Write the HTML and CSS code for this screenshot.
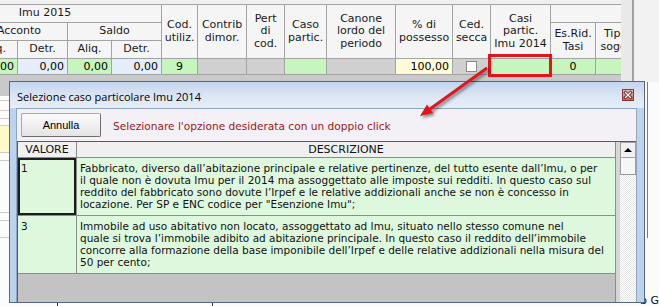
FILE: index.html
```html
<!DOCTYPE html>
<html>
<head>
	<meta charset="utf-8">
	<title>Selezione caso particolare Imu 2014</title>
	<link rel="stylesheet" href="styles.css">
</head>
<body>
<div class="screen">

	<div class="backdrop">
		<div class="sheet">
			<table class="imu">
				<colgroup>
					<col style="width:42px"><col style="width:47px"><col style="width:50px"><col style="width:44px"><col style="width:50px">
					<col style="width:36px"><col style="width:49px"><col style="width:38px"><col style="width:42px"><col style="width:69px">
					<col style="width:57px"><col style="width:38px"><col style="width:60px"><col style="width:45px"><col style="width:40px">
				</colgroup>
				<tr>
					<th colspan="5">Imu 2015</th>
					<th rowspan="3">Cod.<br>utiliz.</th>
					<th rowspan="3">Contrib<br>dimor.</th>
					<th rowspan="3">Pert<br>di<br>cod.</th>
					<th rowspan="3">Caso<br>partic.</th>
					<th rowspan="3">Canone<br>lordo del<br>periodo</th>
					<th rowspan="3">% di<br>possesso</th>
					<th rowspan="3">Ced.<br>secca</th>
					<th rowspan="3">Casi<br>partic.<br>Imu 2014</th>
					<th colspan="2"></th>
				</tr>
				<tr>
					<th rowspan="2">Rend.</th>
					<th colspan="2">Acconto</th>
					<th colspan="2">Saldo</th>
					<th rowspan="2">Es.Rid.<br>Tasi</th>
					<th rowspan="2">Tipo<br>sogg.</th>
				</tr>
				<tr>
					<th>Aliq.</th>
					<th>Detr.</th>
					<th>Aliq.</th>
					<th>Detr.</th>
				</tr>
				<tr class="data">
					<td class="n r">0,00</td>
					<td class="g r">0,00</td>
					<td class="b r">0,00</td>
					<td class="g r">0,00</td>
					<td class="b r">0,00</td>
					<td class="g c">9</td>
					<td class="n"></td>
					<td class="n"></td>
					<td class="g"></td>
					<td class="n"></td>
					<td class="y r">100,00</td>
					<td class="n c"><span class="check"></span></td>
					<td class="g"></td>
					<td class="g c">0</td>
					<td class="g"></td>
				</tr>
			</table>
			<div class="band"></div>
			<div class="list">
				<div class="li h5"></div>
				<div class="li h10"></div>
				<div class="li h8"></div>
				<div class="li h7"></div>
				<div class="li h27 yellow"></div>
				<div class="li h8"></div>
				<div class="li h52"></div>
				<div class="li h8"></div>
				<div class="li h17"></div>
				<div class="tab"></div>
			</div>
		</div>
		<div class="side">
			<div class="side-top"><div class="pane"></div></div>
			<div class="side-bottom">
				<div class="vline"></div>
				<div class="side-foot">b G</div>
			</div>
		</div>
	</div>

	<div class="dialog">
		<div class="titlebar">
			<span>Selezione caso particolare Imu 2014</span>
			<span class="close">
				<svg width="12" height="12" viewBox="0 0 12 12">
					<path d="M3.5 3.5 L8.5 8.5 M8.5 3.5 L3.5 8.5" stroke="#5a1414" stroke-width="3" stroke-linecap="square"/>
					<path d="M3.5 3.5 L8.5 8.5 M8.5 3.5 L3.5 8.5" stroke="#fff" stroke-width="1.4" stroke-linecap="square"/>
				</svg>
			</span>
		</div>
		<div class="body">
			<div class="toolbar">
				<button class="btn">Annulla</button>
				<span class="hint">Selezionare l'opzione desiderata con un doppio click</span>
			</div>
			<div class="grid">
				<div class="rows">
					<div class="hdr">
						<div class="c-val">VALORE</div>
						<div class="c-desc">DESCRIZIONE</div>
					</div>
					<div class="row sel">
						<div class="c-val">1</div>
						<div class="c-desc">Fabbricato, diverso dall’abitazione principale e relative pertinenze, del tutto esente dall’Imu, o per<br>il quale non è dovuta Imu per il 2014 ma assoggettato alle imposte sui redditi. In questo caso sul<br>reddito del fabbricato sono dovute l’Irpef e le relative addizionali anche se non è concesso in<br>locazione. Per SP e ENC codice per "Esenzione Imu";</div>
					</div>
					<div class="row">
						<div class="c-val">3</div>
						<div class="c-desc">Immobile ad uso abitativo non locato, assoggettato ad Imu, situato nello stesso comune nel<br>quale si trova l’immobile adibito ad abitazione principale. In questo caso il reddito dell’immobile<br>concorre alla formazione della base imponibile dell’Irpef e delle relative addizionali nella misura del<br>50 per cento;</div>
					</div>
				</div>
				<div class="gap"></div>
				<div class="scroll">
					<div class="up"><span class="tri"></span></div>
					<div class="thumb"></div>
				</div>
			</div>
		</div>
	</div>

	<div class="mark"></div>
	<svg class="arrow" width="659" height="306" viewBox="0 0 659 306">
		<line x1="487" y1="68" x2="430" y2="109" stroke="#e3141c" stroke-width="3"/>
		<polygon points="420,116 433,113 427,104.5" fill="#e3141c"/>
	</svg>

</div>
</body>
</html>
```

FILE: styles.css
```css
* {
	box-sizing: border-box;
}

html, body {
	margin: 0;
}

body {
	width: 659px;
	height: 306px;
	overflow: hidden;
	background: #f0f0f0;
	font-family: "DejaVu Sans", Verdana, sans-serif;
	color: #111;
}

.screen {
	position: relative;
	width: 659px;
	height: 306px;
	overflow: hidden;
}

/* window behind the dialog */

.backdrop {
	display: flex;
	height: 100%;
}

.sheet {
	width: 621px;
	overflow: hidden;
	display: flex;
	flex-direction: column;
	padding-top: 4px;
}

.imu {
	border-collapse: collapse;
	table-layout: fixed;
	width: 707px;
	margin-left: -72px;
	font-size: 11px;
	flex: none;
}

.imu th {
	background: #f5f5f5;
	border: 1px solid #a3a3a3;
	font-weight: normal;
	line-height: 12.5px;
	height: 18px;
	padding: 0;
	color: #1a1a1a;
	white-space: nowrap;
	overflow: hidden;
}

.imu td {
	border: 1px solid #a3a3a3;
	height: 16px;
	padding: 0 3px;
	line-height: 14px;
	color: #000;
	white-space: nowrap;
}

.g { background: #c6f5bd; }
.b { background: #e4eefa; }
.n { background: #d0d0d0; }
.y { background: #fffbd6; }
.r { text-align: right; }
.c { text-align: center; }

.check {
	display: inline-block;
	width: 11px;
	height: 11px;
	background: #fff;
	border: 1px solid #8a8a8a;
	vertical-align: middle;
}

.band {
	height: 21px;
	background: #c9c9c9;
	flex: none;
}

.list {
	flex: 1;
	background: #fcfcfc;
	display: flex;
	flex-direction: column;
}

.li {
	border-bottom: 1px solid #cdcdcd;
}

.h5 { height: 5px; }
.h7 { height: 7px; }
.h8 { height: 8px; }
.h10 { height: 10px; }
.h17 { height: 17px; }
.h27 { height: 27px; }
.h52 { height: 52px; }

.yellow {
	background: #fff8c8;
}

.tab {
	margin-top: auto;
	margin-left: 57px;
	width: 156px;
	height: 4px;
	border: 1px solid #333;
	border-bottom: none;
	background: #fff;
}

.side {
	flex: 1;
	display: flex;
	flex-direction: column;
}

.side-top {
	height: 82px;
	padding-left: 11px;
	background: #e9e9e9;
}

.side-top .pane {
	height: 100%;
	border-left: 2px solid #a0a0a0;
	background: #f2f2f2;
}

.side-bottom {
	flex: 1;
	background: #fbfbfb;
	padding-left: 26px;
	display: flex;
	flex-direction: column;
}

.vline {
	height: 156px;
	border-left: 1px solid #7a7a7a;
}

.side-foot {
	margin-top: auto;
	margin-left: -7px;
	font-size: 11px;
	line-height: 10px;
	white-space: nowrap;
}

/* dialog */

.dialog {
	position: absolute;
	left: 9px;
	top: 81px;
	width: 636px;
	height: 222px;
	border: 1px solid #56677e;
	background: #bcd3ee;
	display: flex;
	flex-direction: column;
}

.titlebar {
	height: 26px;
	flex: none;
	display: flex;
	align-items: center;
	justify-content: space-between;
	padding: 2px 10px 0 7px;
	background: linear-gradient(#c2d5ee, #dce6f3 55%, #e6edf6);
	font-family: "Open Sans", sans-serif;
	font-size: 11px;
	color: #000;
}

.close {
	display: flex;
	width: 12px;
	height: 12px;
	border: 1px solid #8e3434;
	background: linear-gradient(#e9b9b0, #c8675d);
	margin-top: -2px;
}

.close svg {
	margin: -1px;
}

.body {
	flex: 1;
	margin: 0 7px 0 6px;
	background: #f3f1f6;
	border: 1px solid #8fa5c2;
	border-bottom: none;
	display: flex;
	flex-direction: column;
}

.toolbar {
	height: 32px;
	flex: none;
	display: flex;
	align-items: center;
	gap: 12px;
	padding-left: 4px;
}

.btn {
	width: 80px;
	height: 24px;
	padding: 0;
	font-family: "Liberation Sans", Arial, sans-serif;
	font-size: 11px;
	color: #000;
	background: linear-gradient(#fbfbfb, #e4e4e4);
	border: 1px solid #a8a8a8;
	border-right-color: #6e6e6e;
	border-bottom-color: #6e6e6e;
	border-radius: 2px;
}

.hint {
	font-size: 10.6px;
	color: #9c1717;
	padding-top: 2px;
}

.grid {
	flex: 1;
	display: flex;
	border-top: 1px solid #5b5b5b;
	border-left: 1px solid #5b5b5b;
	background: #c3c3c3;
}

.rows {
	width: 598px;
	border-right: 1px solid #8c8c8c;
}

.hdr {
	display: flex;
	height: 16px;
	background: #f0f0f0;
	border-bottom: 1px solid #8c8c8c;
	font-size: 11px;
	line-height: 15px;
}

.c-val {
	width: 59px;
	flex: none;
	border-right: 1px solid #8c8c8c;
}

.hdr .c-val {
	text-align: center;
}

.c-desc {
	flex: 1;
}

.hdr .c-desc {
	text-align: center;
}

.row {
	display: flex;
	background: #ddf8dd;
	border-bottom: 1px solid #8c8c8c;
	font-size: 10.5px;
	line-height: 12px;
	white-space: nowrap;
}

.row .c-val {
	padding: 4px 3px;
}

.row .c-desc {
	padding: 4px 3px 5px 3px;
}

.row.sel .c-val {
	box-shadow: inset 0 0 0 2px #1c1c1c;
}

.gap {
	width: 4px;
	background: #d6d6d6;
}

.scroll {
	width: 16px;
	background: repeating-conic-gradient(#fdfdfd 0 25%, #e6e6e6 0 50%) 0 0 / 2px 2px;
}

.up {
	height: 16px;
	background: #f0f0f0;
	border: 1px solid #a0a0a0;
	display: flex;
	align-items: center;
	justify-content: center;
}

.tri {
	width: 0;
	height: 0;
	border-left: 4px solid transparent;
	border-right: 4px solid transparent;
	border-bottom: 4px solid #000;
}

.thumb {
	height: 17px;
	background: #f6f6f6;
	border: 1px solid #9a9a9a;
	border-top: none;
}

/* annotation */

.mark {
	position: absolute;
	left: 488px;
	top: 54px;
	width: 64px;
	height: 23px;
	border: 3px solid #e3141c;
}

.arrow {
	position: absolute;
	left: 0;
	top: 0;
	filter: drop-shadow(2px 2px 1.5px rgba(0, 0, 0, 0.45));
	pointer-events: none;
}
```
